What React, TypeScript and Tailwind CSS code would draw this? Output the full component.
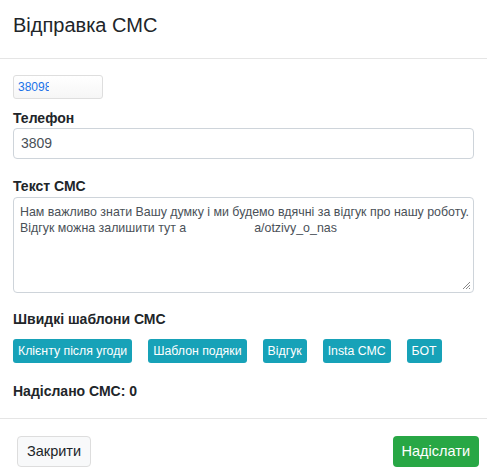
const templates = ['Клієнту після угоди', 'Шаблон подяки', 'Відгук', 'Insta СМС', 'БОТ']

export default function App() {
  return (
    <div className="w-[487px] h-[475px] bg-white text-[#212529] overflow-hidden" style={{ fontFamily: '"Liberation Sans", Arial, sans-serif' }}>
      <div className="h-[59px] border-b border-[#e5e5e5] px-[13px] flex items-center">
        <h4 className="text-[20px] leading-none pb-[8px]">Відправка СМС</h4>
      </div>

      <div className="px-[13px] pt-[16px]">
        <div className="w-[90px] h-[24px] border border-[#dedede] rounded-[3px] bg-gradient-to-b from-white to-[#f6f6f6] flex items-center pl-[4px] overflow-hidden">
          <span className="text-[12px] text-[#1a73e8] w-[31px] overflow-hidden whitespace-nowrap">380981</span>
        </div>

        <label className="block text-[14px] font-bold mt-[11px] leading-[17px]">Телефон</label>
        <div className="mt-[1px] h-[31px] border border-[#ced4da] rounded-[4px] flex items-center px-[7px] text-[14px] text-[#495057]">3809</div>

        <label className="block text-[14px] font-bold mt-[19px] leading-[17px]">Текст СМС</label>
        <div className="relative mt-[2px] h-[96px] border border-[#ced4da] rounded-[4px] px-[6px] pt-[6px] text-[12.4px] leading-[16px] text-[#495057]">
          <div className="whitespace-nowrap">Нам важливо знати Вашу думку і ми будемо вдячні за відгук про нашу роботу.</div>
          <div className="whitespace-nowrap">
            Відгук можна залишити тут а<span className="inline-block w-[68px]" />a/otzivy_o_nas
          </div>
          <svg className="absolute right-[2px] bottom-[2px]" width="10" height="10" viewBox="0 0 10 10">
            <path d="M9 2L2 9M9 5L5 9M9 8L8 9" stroke="#888" strokeWidth="1" />
          </svg>
        </div>

        <label className="block text-[14px] font-bold mt-[18px] leading-[17px]">Швидкі шаблони СМС</label>
        <div className="flex gap-[16px] mt-[11px]">
          {templates.map((t) => (
            <button key={t} className="h-[24px] px-[5px] rounded-[3px] bg-[#17a2b8] text-white text-[12.3px] leading-none">
              {t}
            </button>
          ))}
        </div>

        <div className="text-[14px] font-bold mt-[20px] leading-[17px]">Надіслано СМС: 0</div>
      </div>

      <div className="mt-[18px] border-t border-[#e5e5e5] pl-[17px] pr-[8px] pt-[17px] flex justify-between">
        <button className="h-[31px] px-[9px] rounded-[4px] border border-[#dddddd] bg-[#f8f9fa] text-[14.5px] text-[#212529]">Закрити</button>
        <button className="h-[31px] px-[9px] rounded-[4px] bg-[#28a745] text-white text-[14.5px]">Надіслати</button>
      </div>
    </div>
  )
}
